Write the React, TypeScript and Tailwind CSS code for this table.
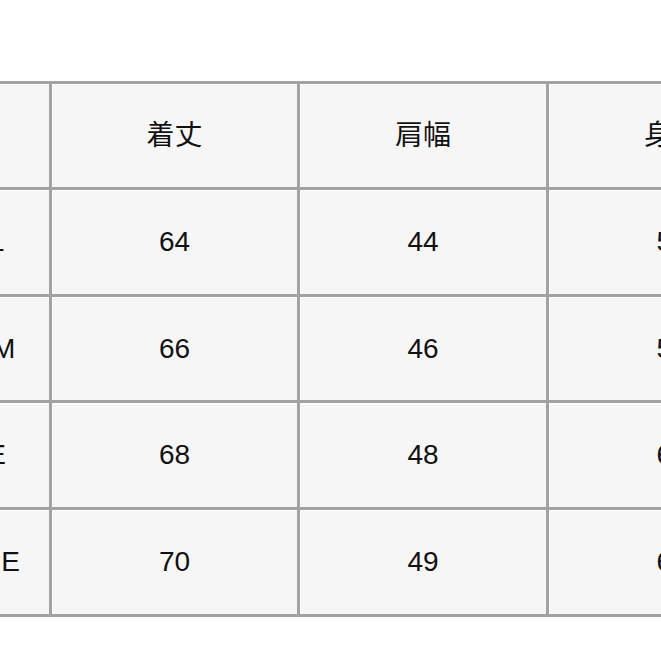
const headers = ["サイズ", "着丈", "肩幅", "身幅"];

const rows = [
  ["SMALL", "64", "44", "54"],
  ["MEDIUM", "66", "46", "57"],
  ["LARGE", "68", "48", "60"],
  ["X-LARGE", "70", "49", "63"],
];

const rowHeights = ["h-[103px]", "h-[104px]", "h-[103px]", "h-[104px]", "h-[104px]"];

export default function App() {
  const all = [headers, ...rows];
  return (
    <div className="h-[661px] w-[661px] overflow-hidden bg-white font-['Liberation_Sans','Noto_Sans_CJK_JP',sans-serif] text-[28px] text-[#111]">
      <div className="ml-[-120px] mt-[81px] grid w-max grid-cols-[166px_245px_246px_246px] gap-[3px] bg-[#a2a2a2] p-[3px]">
        {all.map((row, r) =>
          row.map((cell, c) => (
            <div
              key={`${r}-${c}`}
              className={`${rowHeights[r]} flex items-center justify-center bg-[#f6f6f6] shadow-[inset_1px_1px_0_#ffffff] ${c === 0 ? "pr-[15px]" : ""}`}
            >
              {cell}
            </div>
          ))
        )}
      </div>
    </div>
  );
}
